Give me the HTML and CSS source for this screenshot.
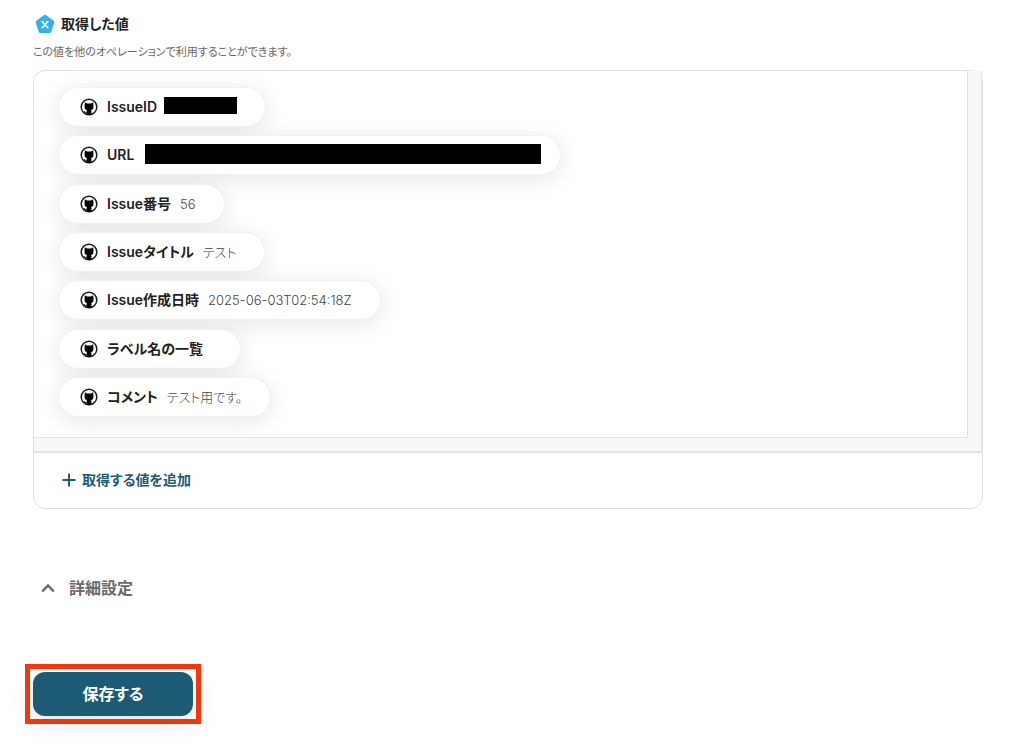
FILE: index.html
```
<!DOCTYPE html>
<html lang="ja">
<head>
    <meta charset="UTF-8">
    <meta name="viewport" content="width=device-width, initial-scale=1.0">
    <title>取得した値</title>
    <link rel="stylesheet" href="styles.css">
</head>
<body>

<svg class="sprite" aria-hidden="true">
    <symbol id="github" viewBox="0 0 18 18">
        <circle cx="9" cy="9" r="7.800" fill="#fff" stroke="#1a1a1a" stroke-width="1.500"/>
        <path fill="#000" d="M4.900 4.300 7 5.400h4l2.100-1.100.3 2.300v3.200c0 1.300-1 2-2.300 2.200.2.500.3 1 .3 1.500V17H6.600v-2.200c-1.500.2-2-.4-2.600-1.300l-.5-.6c.9-.1 1.300.3 1.800.8.4.4.8.5 1.300.3 0-.8.1-1.400.3-2-1.300-.2-2.300-.9-2.300-2.200V6.600z"/>
    </symbol>
</svg>

<main class="container">
    <section class="values">
        <h2 class="title">
            <svg class="title-icon" viewBox="0 0 20 20" aria-hidden="true">
                <path d="M10 2.200 17.800 8 14.900 17.400H5.100L2.200 8z" fill="#36afe9" stroke="#36afe9" stroke-width="3" stroke-linejoin="round"/>
                <path d="M6.500 7.800h2.200M11.300 7.800h2.200M6.500 13.600h2.200M11.300 13.600h2.200M7.600 7.900l4.800 5.600M12.400 7.900l-4.800 5.600" fill="none" stroke="#fff" stroke-width="1.500"/>
            </svg>
            取得した値
        </h2>
        <p class="description">この値を他のオペレーションで利用することができます。</p>

        <div class="panel">
            <div class="scroller">
                <ul class="pills">
                    <li class="pill"><svg class="icon"><use href="#github"/></svg><span class="name">IssueID</span><span class="mask mask-id"></span></li>
                    <li class="pill pill-url"><svg class="icon"><use href="#github"/></svg><span class="name">URL</span><span class="mask mask-url"></span></li>
                    <li class="pill"><svg class="icon"><use href="#github"/></svg><span class="name">Issue番号</span><span class="value">56</span></li>
                    <li class="pill"><svg class="icon"><use href="#github"/></svg><span class="name">Issueタイトル</span><span class="value">テスト</span></li>
                    <li class="pill"><svg class="icon"><use href="#github"/></svg><span class="name">Issue作成日時</span><span class="value">2025-06-03T02:54:18Z</span></li>
                    <li class="pill"><svg class="icon"><use href="#github"/></svg><span class="name">ラベル名の一覧</span><span class="value"></span></li>
                    <li class="pill"><svg class="icon"><use href="#github"/></svg><span class="name">コメント</span><span class="value">テスト用です。</span></li>
                </ul>
                <div class="track track-y"></div>
                <div class="track track-x"></div>
                <div class="track track-corner"></div>
            </div>
            <div class="panel-footer">
                <button type="button" class="add-btn">
                    <svg class="add-icon" viewBox="0 0 14 14" aria-hidden="true"><path d="M7 .5v13M.5 7h13" stroke="#1d5b75" stroke-width="2"/></svg>
                    取得する値を追加
                </button>
            </div>
        </div>
    </section>

    <button type="button" class="details-btn">
        <svg class="chevron" viewBox="0 0 14 10" aria-hidden="true"><path d="M1.200 8.500 7 2.500l5.800 6" fill="none" stroke="#666" stroke-width="2.400"/></svg>
        詳細設定
    </button>

    <div class="highlight">
        <button type="submit" class="save-btn">保存する</button>
    </div>
</main>

</body>
</html>
```
FILE: styles.css
```
/* Reset */
* {
    margin: 0;
    padding: 0;
    box-sizing: border-box;
}
body {
    font-family: Inter, "Noto Sans CJK JP", sans-serif;
    font-feature-settings: "palt";
    font-size: 14px;
    background: #fff;
    color: #222;
}
button {
    font: inherit;
    font-feature-settings: inherit;
    border: none;
    background: none;
    cursor: pointer;
}
.sprite {
    display: none;
}
.container {
    padding: 12px 41px 32px 33px;
}
/* Heading */
.title {
    display: flex;
    align-items: center;
    gap: 6px;
    padding-left: 2px;
    font-size: 14px;
    line-height: 24px;
    font-weight: 600;
}
.title-icon {
    width: 20px;
    height: 20px;
}
.description {
    margin: 6px 0 8px;
    font-size: 11px;
    line-height: 20px;
    color: #666;
}
/* Value panel */
.panel {
    border: 1px solid #e0e0e0;
    border-radius: 12px;
}
.scroller {
    display: grid;
    grid-template-columns: 1fr 15px;
    grid-template-rows: auto 15px;
    border-bottom: 1px solid #e0e0e0;
}
.pills {
    display: flex;
    flex-direction: column;
    align-items: flex-start;
    justify-content: space-between;
    min-height: 366px;
    padding: 16px 24px 20px;
    list-style: none;
    overflow: hidden;
    border-radius: 12px 0 0 0;
}
.pill {
    display: flex;
    align-items: center;
    gap: 9px;
    height: 40px;
    padding: 0 28px 0 21px;
    border: 1px solid #f1f1f1;
    border-radius: 20px;
    background: #fff;
    box-shadow: 0 4px 24px rgba(0, 0, 0, 0.1);
    line-height: 20px;
    white-space: nowrap;
}
.pill-url {
    padding-right: 19px;
}
.icon {
    width: 18px;
    height: 18px;
}
.name {
    font-weight: 600;
}
.value {
    font-size: 13px;
    font-weight: 300;
    color: #444;
}
.mask {
    background: #000;
}
.mask-id {
    width: 73px;
    height: 17px;
    margin: 0 0 4px -2px;
}
.mask-url {
    width: 396px;
    height: 20px;
    margin: 0 0 2px 2px;
}
.track {
    background: #f8f8f8;
}
.track-y {
    border-left: 1px solid #e0e0e0;
    border-right: 1px solid #e6e6e6;
}
.track-x {
    border-top: 1px solid #e0e0e0;
    border-bottom: 1px solid #e6e6e6;
}
.track-corner {
    border-right: 1px solid #e6e6e6;
    border-bottom: 1px solid #e6e6e6;
}
.panel-footer {
    padding: 15px 28px 16px;
}
.add-btn {
    display: flex;
    align-items: center;
    gap: 6px;
    line-height: 24px;
    font-weight: 600;
    color: #1d5b75;
}
.add-icon {
    width: 14px;
    height: 14px;
}
/* Advanced settings */
.details-btn {
    display: flex;
    align-items: center;
    gap: 14px;
    margin: 67px 0 64px 8px;
    font-size: 16px;
    line-height: 24px;
    font-weight: 600;
    color: #6a6a6a;
}
.chevron {
    width: 14px;
    height: 10px;
}
/* Save button */
.highlight {
    width: fit-content;
    margin-left: -8px;
    padding: 3px;
    border: 5px solid #f5390d;
}
.save-btn {
    display: block;
    min-width: 160px;
    padding: 10px 24px;
    border-radius: 12px;
    background: #1d5b75;
    box-shadow: 0 6px 24px rgba(29, 60, 80, 0.16);
    color: #fff;
    font-size: 16px;
    line-height: 24px;
    font-weight: 600;
}
```
